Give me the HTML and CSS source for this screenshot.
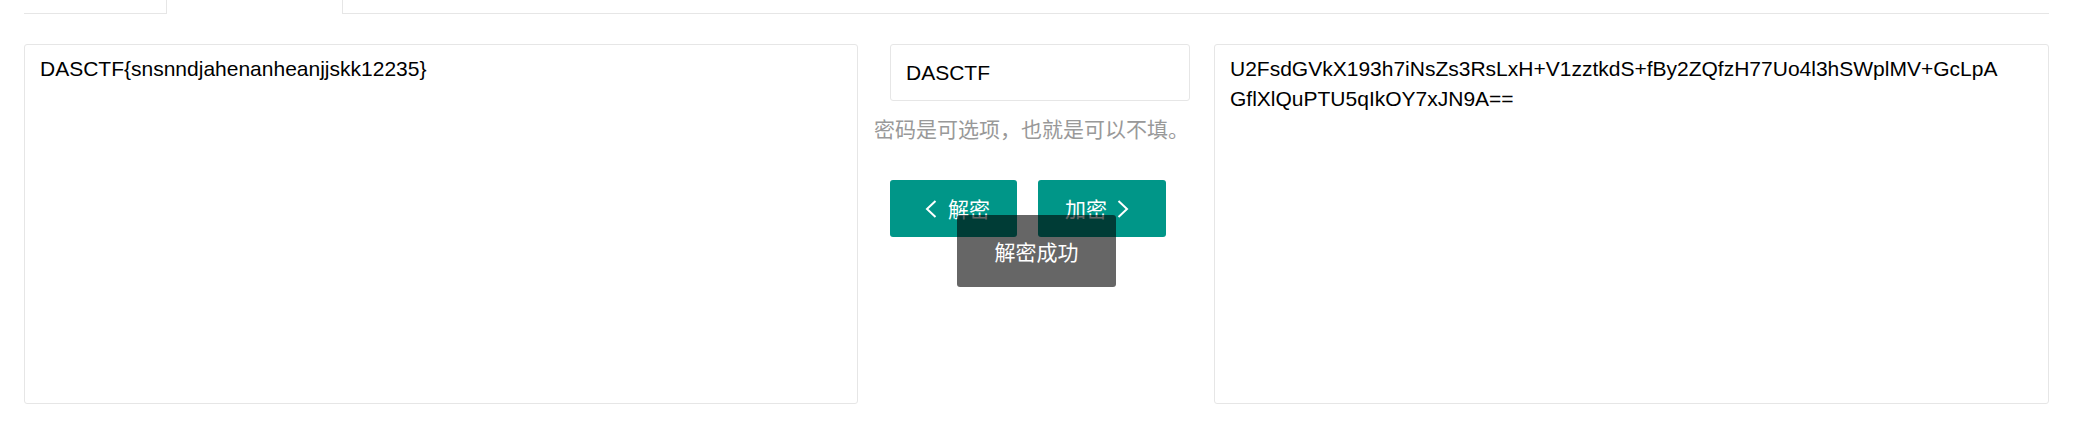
FILE: index.html
```html
<!DOCTYPE html>
<html lang="zh-CN">
<head>
<meta charset="utf-8">
<title>加密解密</title>
<link rel="stylesheet" href="styles.css">
</head>
<body>
<div class="page">
  <div class="tabs">
    <div class="tab"></div>
    <div class="tab tab-active"></div>
    <div class="tab-rest"></div>
  </div>
  <div class="row">
    <textarea class="box box-left" readonly>DASCTF{snsnndjahenanheanjjskk12235}</textarea>
    <div class="mid">
      <input class="pwd" type="text" value="DASCTF" readonly>
      <p class="hint">密码是可选项，也就是可以不填。</p>
      <div class="btns">
        <button class="btn btn-dec" type="button"><svg class="chev" viewBox="0 0 12 18" width="12" height="18"><polyline points="10.5,1 2,9 10.5,17" fill="none" stroke="#fff" stroke-width="2"/></svg><span>解密</span></button>
        <button class="btn btn-enc" type="button"><span>加密</span><svg class="chev" viewBox="0 0 12 18" width="12" height="18"><polyline points="1.5,1 10,9 1.5,17" fill="none" stroke="#fff" stroke-width="2"/></svg></button>
      </div>
    </div>
    <textarea class="box box-right" readonly>U2FsdGVkX193h7iNsZs3RsLxH+V1zztkdS+fBy2ZQfzH77Uo4l3hSWplMV+GcLpA
GflXlQuPTU5qIkOY7xJN9A==</textarea>
  </div>
</div>
<div class="toast">解密成功</div>
</body>
</html>
```
FILE: styles.css
```css
html, body {
  margin: 0;
  padding: 0;
  background: #fff;
}
body {
  font-family: "Liberation Sans", Arial, "Noto Sans CJK SC", sans-serif;
  color: #000;
}
.page {
  padding: 0 48px 0 24px;
}
.tabs {
  display: flex;
  height: 13px;
  border-bottom: 1px solid #e6e6e6;
}
.tab {
  width: 142px;
}
.tab-active {
  width: 175px;
  height: 14px;
  background: #fff;
  border-left: 1px solid #e6e6e6;
  border-right: 1px solid #e6e6e6;
}
.tab-rest {
  flex: 1;
}
.row {
  display: flex;
  margin-top: 30px;
}
.box {
  box-sizing: border-box;
  height: 360px;
  margin: 0;
  padding: 9px 15px;
  border: 1px solid #e6e6e6;
  border-radius: 3px;
  background: #fff;
  font-family: "Liberation Sans", Arial, sans-serif;
  font-size: 21px;
  line-height: 30px;
  color: #000;
  resize: none;
  outline: none;
  overflow: hidden;
}
.box-left {
  width: 834px;
}
.box-right {
  flex: 1;
}
.mid {
  width: 356px;
  box-sizing: border-box;
  padding-left: 16px;
  display: flex;
  flex-direction: column;
  align-items: flex-start;
}
.pwd {
  box-sizing: border-box;
  width: 300px;
  height: 57px;
  margin: 0 0 0 16px;
  padding: 0 15px;
  border: 1px solid #e6e6e6;
  border-radius: 3px;
  background: #fff;
  font-family: "Liberation Sans", Arial, sans-serif;
  font-size: 21px;
  color: #000;
  outline: none;
}
.hint {
  margin: 12px 0 0 0;
  font-family: "Noto Sans CJK SC", sans-serif;
  font-size: 21px;
  line-height: 30px;
  color: #999;
  white-space: nowrap;
}
.btns {
  display: flex;
  gap: 21px;
  margin: 37px 0 0 16px;
}
.btn {
  box-sizing: border-box;
  display: flex;
  align-items: center;
  height: 57px;
  margin: 0;
  border: 0;
  border-radius: 3px;
  background: #009688;
  color: #fff;
  font-family: "Noto Sans CJK SC", sans-serif;
  font-size: 21px;
  line-height: 57px;
}
.btn-dec {
  width: 127px;
  padding: 0 0 0 35px;
  gap: 11px;
}
.btn-enc {
  width: 128px;
  padding: 0 0 0 27px;
  gap: 10px;
}
.chev {
  display: block;
  flex: none;
}
.toast {
  position: absolute;
  left: 957px;
  top: 215px;
  box-sizing: border-box;
  width: 159px;
  height: 72px;
  padding: 18px 0;
  border-radius: 3px;
  background: rgba(0, 0, 0, 0.6);
  color: #fff;
  font-family: "Noto Sans CJK SC", sans-serif;
  font-size: 21px;
  line-height: 36px;
  text-align: center;
}
```
